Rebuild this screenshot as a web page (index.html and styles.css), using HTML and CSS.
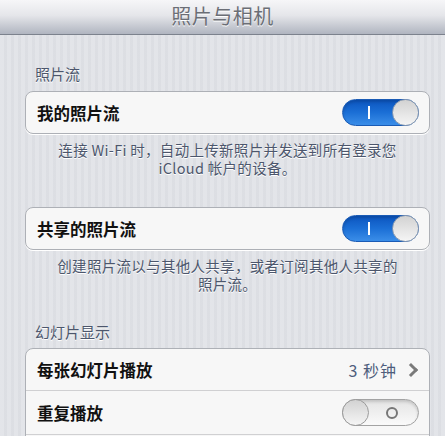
FILE: index.html
```html
<!DOCTYPE html>
<html lang="zh-CN">
<head>
  <meta charset="UTF-8" />
  <title>照片与相机</title>
  <link rel="stylesheet" href="styles.css">
</head>
<body>

  <div class="navbar">
    <h1>照片与相机</h1>
  </div>

  <div class="settings">
    <div class="section-title">照片流</div>
    <div class="group">
      <div class="row">
        <span class="label">我的照片流</span>
        <span class="switch on"><span class="knob"></span></span>
      </div>
    </div>
    <div class="footnote">连接 Wi-Fi 时，自动上传新照片并发送到所有登录您<br>iCloud 帐户的设备。</div>

    <div class="group">
      <div class="row">
        <span class="label">共享的照片流</span>
        <span class="switch on"><span class="knob"></span></span>
      </div>
    </div>
    <div class="footnote">创建照片流以与其他人共享，或者订阅其他人共享的<br>照片流。</div>

    <div class="section-title">幻灯片显示</div>
    <div class="group">
      <div class="row">
        <span class="label">每张幻灯片播放</span>
        <span class="detail">3 秒钟</span>
        <span class="chevron"></span>
      </div>
      <div class="row">
        <span class="label">重复播放</span>
        <span class="switch"><span class="knob"></span></span>
      </div>
      <!-- next row starts just below the fold -->
      <div class="row"></div>
    </div>
  </div>

</body>
</html>
```

FILE: styles.css
```css
html, body {
  margin: 0;
  height: 100%;
  overflow: hidden;
}
body {
  font-family: "Noto Sans CJK SC", "Liberation Sans", sans-serif;
  background-color: #dfe1e6;
  background-image: repeating-linear-gradient(90deg, rgba(255,255,255,0.12) 0 4px, rgba(0,0,0,0.01) 4px 7px);
}
.navbar {
  height: 34px;
  border-bottom: 1px solid #7c828d;
  background: linear-gradient(#f6f6f8, #e5e6ea 45%, #b0b5c0);
  display: flex;
  justify-content: center;
  align-items: center;
}
.navbar h1 {
  margin: 0 0 4px 0;
  font-size: 20px;
  font-weight: normal;
  color: #6b6e76;
  text-shadow: 0 1px 0 #fff;
  letter-spacing: 0.5px;
}
.settings {
  padding: 0 15px 0 25px;
}
.section-title {
  margin: 30px 0 8px 10px;
  font-size: 15px;
  line-height: 18px;
  color: #4c566c;
  text-shadow: 0 1px 0 #fff;
}
.group {
  background-color: #f7f7f7;
  border: 1px solid #adb0b6;
  border-radius: 8px;
  box-shadow: 0 1px 0 #fff;
  overflow: hidden;
}
.row {
  height: 43px;
  display: flex;
  align-items: center;
  padding: 0 10px 0 11px;
  border-top: 1px solid #d0d0d2;
}
.row:first-child {
  height: 41px;
  border-top: none;
}
.label {
  flex: 1;
  font-size: 16.5px;
  font-weight: bold;
  color: #111;
}
.detail {
  font-size: 16px;
  color: #4e5d7c;
  letter-spacing: 1px;
}
.chevron {
  width: 7px;
  height: 7px;
  margin: 0 3px 0 9px;
  border-top: 3px solid #7a7a7a;
  border-right: 3px solid #7a7a7a;
  transform: rotate(45deg);
}
.footnote {
  margin: 7px 0 30px 0;
  text-align: center;
  font-size: 14.5px;
  line-height: 18px;
  letter-spacing: 0.3px;
  color: #4c566c;
  text-shadow: 0 1px 0 #fff;
}
.footnote + .section-title {
  margin-top: 19px;
  margin-bottom: 7px;
}
.switch {
  position: relative;
  width: 75px;
  height: 25px;
  border: 1px solid #a3a3a3;
  border-radius: 14px;
  background: linear-gradient(#e4e4e4, #fafafa);
  box-shadow: inset 0 2px 3px rgba(0,0,0,0.15);
}
.switch::after {
  content: "";
  position: absolute;
  left: 43px;
  top: 7px;
  width: 8px;
  height: 8px;
  border: 2px solid #777;
  border-radius: 50%;
}
.switch.on {
  border-color: #1a5bb5;
  background: linear-gradient(#0c55bf, #1b6fd6 50%, #3b8ee8);
}
.switch.on::after {
  left: 25px;
  top: 6px;
  width: 2px;
  height: 13px;
  border: none;
  border-radius: 0;
  background-color: #fff;
}
.knob {
  position: absolute;
  left: -1px;
  top: -1px;
  width: 25px;
  height: 25px;
  border: 1px solid #9b9b9b;
  border-radius: 50%;
  background: linear-gradient(#d2d2d2, #f5f5f5);
}
.switch.on .knob {
  left: auto;
  right: -1px;
  border-color: #8a9bb0;
}
```
